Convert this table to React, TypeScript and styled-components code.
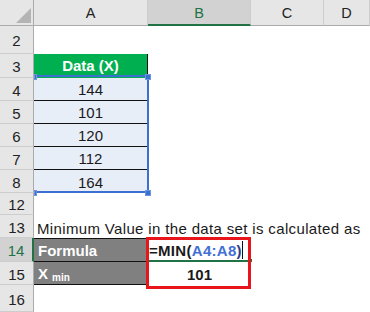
import React from 'react';
import styled, { createGlobalStyle } from 'styled-components';

const GREEN = '#217346';
const HEAD_BG = '#e6e6e6';
const HEAD_SEL = '#d2d2d2';
const HEAD_LINE = '#cdcdcd';
const HEAD_EDGE = '#ababab';
const RANGE_BLUE = '#3b6fd1';

const Global = createGlobalStyle`
  html, body { margin: 0; padding: 0; background: #fff; }
  body { font-family: "Liberation Sans", Arial, sans-serif; }
  * { box-sizing: border-box; }
`;

const Sheet = styled.div`
  position: relative;
  width: 370px;
  height: 312px;
  overflow: hidden;
  display: grid;
  grid-template-columns: 34px 114px 103px 73px 46px;
  grid-template-rows: 26px 28px 24px repeat(5, 23px) 22px 23px 24px 23px 27px;
  color: #1a1a1a;
`;

const Corner = styled.div`
  background: ${HEAD_BG};
  border-right: 1px solid ${HEAD_EDGE};
  border-bottom: 1px solid ${HEAD_EDGE};
  display: flex;
  align-items: flex-end;
  justify-content: flex-end;
  padding: 0 2px 2px 0;
`;

const Triangle = styled.div`
  width: 0;
  height: 0;
  border-left: 15px solid transparent;
  border-bottom: 15px solid #b4b4b4;
`;

const ColHeader = styled.div<{ $selected?: boolean }>`
  background: ${(p) => (p.$selected ? HEAD_SEL : HEAD_BG)};
  border-right: 1px solid ${HEAD_LINE};
  border-bottom: ${(p) => (p.$selected ? `2px solid ${GREEN}` : `1px solid ${HEAD_EDGE}`)};
  color: ${(p) => (p.$selected ? GREEN : '#222')};
  font-size: 14.5px;
  display: flex;
  align-items: center;
  justify-content: center;
  padding-top: 1px;
`;

const RowHeader = styled.div<{ $selected?: boolean }>`
  background: ${(p) => (p.$selected ? HEAD_SEL : HEAD_BG)};
  border-right: ${(p) => (p.$selected ? `2px solid ${GREEN}` : `1px solid ${HEAD_EDGE}`)};
  border-bottom: 1px solid ${HEAD_LINE};
  color: ${(p) => (p.$selected ? GREEN : '#222')};
  font-size: 15px;
  display: flex;
  align-items: center;
  justify-content: center;
  padding-top: 2px;
`;

const Blank = styled.div`
  background: #fff;
`;

const DataHead = styled.div`
  background: #00b050;
  color: #fff;
  font-weight: bold;
  font-size: 15px;
  border-right: 1px solid #111;
  display: flex;
  align-items: center;
  justify-content: center;
  padding-bottom: 2px;
`;

const DataCell = styled.div<{ $last?: boolean }>`
  background: #e8eef8;
  border-right: 1px solid #111;
  border-bottom: ${(p) => (p.$last ? 'none' : '1px solid #111')};
  font-size: 15px;
  display: flex;
  align-items: center;
  justify-content: center;
  padding-top: 1px;
`;

const Note = styled.div`
  grid-column: 2 / -1;
  white-space: nowrap;
  font-size: 15px;
  letter-spacing: 0.35px;
  display: flex;
  align-items: flex-end;
  padding: 0 0 1px 3px;
`;

const LabelCell = styled.div<{ $top?: boolean }>`
  background: #808080;
  color: #fff;
  font-weight: bold;
  font-size: 15px;
  border-top: ${(p) => (p.$top ? '1px solid #111' : 'none')};
  border-bottom: 1px solid #111;
  display: flex;
  align-items: center;
  padding-left: 4px;
`;

const Sub = styled.span`
  font-size: 10px;
  margin-left: 4px;
  position: relative;
  top: 4px;
`;

const FormulaCell = styled.div`
  font-weight: bold;
  font-size: 15px;
  letter-spacing: 0.3px;
  display: flex;
  align-items: center;
  padding: 1px 0 0 1px;
  white-space: nowrap;
`;

const Ref = styled.span`
  color: #4270d4;
`;

const Paren = styled.span`
  color: #303b86;
`;

const ValueCell = styled.div`
  font-weight: bold;
  font-size: 15px;
  display: flex;
  align-items: center;
  justify-content: center;
  padding-top: 2px;
`;

/* Overlays drawn over the grid (range highlight, selection, annotation box) */
const RangeBox = styled.div`
  position: absolute;
  left: 34px;
  top: 75px;
  width: 115px;
  height: 118px;
  border: 2px solid ${RANGE_BLUE};
  border-left: none;
  pointer-events: none;
`;

const Handle = styled.div<{ $l: number; $t: number; $w?: number }>`
  position: absolute;
  left: ${(p) => p.$l}px;
  top: ${(p) => p.$t}px;
  width: ${(p) => p.$w ?? 6}px;
  height: 6px;
  background: ${RANGE_BLUE};
  border: 1px solid #6e95dd;
`;

const RedBox = styled.div`
  position: absolute;
  left: 146px;
  top: 237px;
  width: 105px;
  height: 52px;
  border: 3px solid #e8161b;
  pointer-events: none;
`;

const ActiveLine = styled.div`
  position: absolute;
  left: 149px;
  top: 260px;
  width: 99px;
  height: 2px;
  background: ${GREEN};
`;

const FillHandle = styled.div`
  position: absolute;
  left: 248px;
  top: 258px;
  width: 5px;
  height: 5px;
  background: ${GREEN};
  border: 1px solid #fff;
`;

const Caret = styled.div`
  position: absolute;
  left: 242px;
  top: 241px;
  width: 1px;
  height: 18px;
  background: #111;
`;

const B = () => <Blank />;

export default function App() {
  const data = ['144', '101', '120', '112', '164'];
  return (
    <>
      <Global />
      <Sheet>
        <Corner>
          <Triangle />
        </Corner>
        <ColHeader>A</ColHeader>
        <ColHeader $selected>B</ColHeader>
        <ColHeader>C</ColHeader>
        <ColHeader>D</ColHeader>

        <RowHeader>2</RowHeader>
        <B /><B /><B /><B />

        <RowHeader>3</RowHeader>
        <DataHead>Data (X)</DataHead>
        <B /><B /><B />

        {data.map((v, i) => (
          <React.Fragment key={v + i}>
            <RowHeader>{i + 4}</RowHeader>
            <DataCell $last={i === data.length - 1}>{v}</DataCell>
            <B /><B /><B />
          </React.Fragment>
        ))}

        <RowHeader>12</RowHeader>
        <B /><B /><B /><B />

        <RowHeader>13</RowHeader>
        <Note>Minimum Value in the data set is calculated as</Note>

        <RowHeader $selected>14</RowHeader>
        <LabelCell $top>Formula</LabelCell>
        <FormulaCell>
          =MIN(<Ref>A4:A8</Ref>
          <Paren>)</Paren>
        </FormulaCell>
        <B /><B />

        <RowHeader>15</RowHeader>
        <LabelCell>
          X<Sub>min</Sub>
        </LabelCell>
        <ValueCell>101</ValueCell>
        <B /><B />

        <RowHeader>16</RowHeader>
        <B /><B /><B /><B />

        <RangeBox />
        <Handle $l={34} $t={74} $w={3} />
        <Handle $l={145} $t={74} />
        <Handle $l={34} $t={190} $w={3} />
        <Handle $l={145} $t={190} />
        <ActiveLine />
        <FillHandle />
        <Caret />
        <RedBox />
      </Sheet>
    </>
  );
}
